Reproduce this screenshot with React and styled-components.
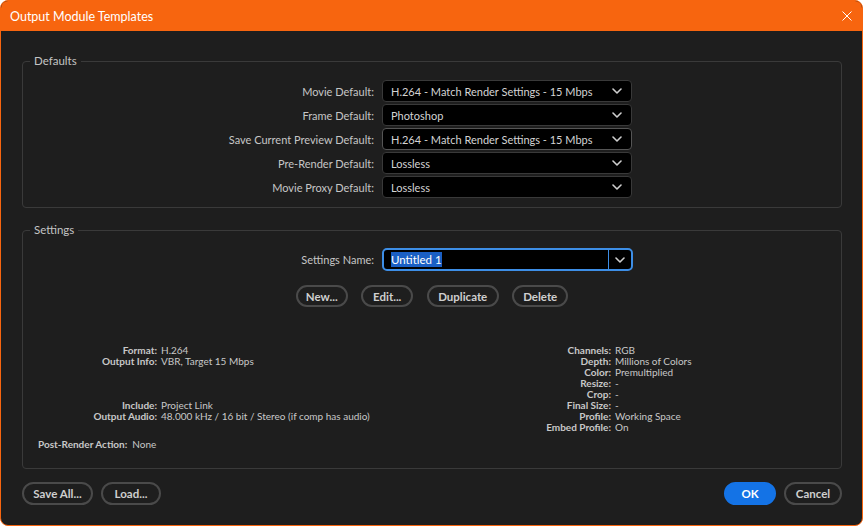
import React from 'react';
import styled, { createGlobalStyle } from 'styled-components';

const Global = createGlobalStyle`
  html, body { margin: 0; padding: 0; background: #ffffff; }
  body { font-family: Lato, "Open Sans", "Liberation Sans", sans-serif; }
  #root { width: 863px; height: 526px; }
`;

const Window = styled.div`
  box-sizing: border-box;
  width: 863px;
  height: 526px;
  border: 1px solid #f7650f;
  border-radius: 8px;
  background: #1e1e1e;
  display: flex;
  flex-direction: column;
  overflow: hidden;
`;

const TitleBar = styled.div`
  flex: none;
  height: 30px;
  background: #f7650f;
  display: flex;
  align-items: center;
  justify-content: space-between;
  padding: 0 10px 0 9px;
  color: #ffffff;
  font-size: 12.5px;
`;

const CloseButton = styled.button`
  border: 0;
  padding: 0;
  background: transparent;
  width: 10px;
  height: 10px;
  display: flex;
  color: #ffffff;
`;

const Body = styled.div`
  flex: 1;
  display: flex;
  flex-direction: column;
  padding: 23px 20px 0 21px;
`;

const Group = styled.fieldset`
  margin: ${(p) => p.$mt || 0}px 0 0 0;
  padding: ${(p) => p.$pt}px 0 ${(p) => p.$pb}px 0;
  border: 1px solid #3a3a3a;
  border-radius: 4px;
  min-width: 0;
`;

const Legend = styled.legend`
  margin-left: 7px;
  padding: 0 4px;
  font-size: 11.5px;
  line-height: 14px;
  color: #c4c4c4;
`;

const FormGrid = styled.div`
  display: grid;
  grid-template-columns: 351px 250px;
  column-gap: 8px;
  row-gap: 2px;
  align-items: center;
`;

const Label = styled.div`
  text-align: right;
  font-size: 11px;
  color: #c6c6c6;
  white-space: nowrap;
`;

const Select = styled.div`
  box-sizing: border-box;
  height: 22px;
  background: #000000;
  border: 1px solid ${(p) => (p.$active ? '#555555' : '#393939')};
  border-radius: 4px;
  display: flex;
  align-items: center;
  justify-content: space-between;
  padding: 0 9px 0 8px;
  color: #d4d4d4;
  font-size: 11px;
  white-space: nowrap;
`;

const Combo = styled.div`
  box-sizing: border-box;
  height: 23px;
  width: 251px;
  background: #000000;
  border: 2px solid #3d8ee6;
  border-radius: 5px;
  display: flex;
  align-items: stretch;
`;

const ComboInput = styled.div`
  flex: 1;
  display: flex;
  align-items: center;
  padding-left: 7px;
  font-size: 11.5px;
`;

const Selection = styled.span`
  background: #1a5fc4;
  color: #ffffff;
  padding: 1px 0;
  line-height: 13px;
`;

const ComboButton = styled.div`
  width: 22px;
  border-left: 1px solid #3d8ee6;
  display: flex;
  align-items: center;
  justify-content: center;
`;

const ButtonRow = styled.div`
  display: flex;
  justify-content: ${(p) => p.$justify || 'center'};
  gap: ${(p) => p.$gap}px;
  margin-top: ${(p) => p.$mt}px;
`;

const Spacer = styled.div`
  flex: 1;
`;

const PillButton = styled.button`
  box-sizing: border-box;
  height: ${(p) => p.$h || 22}px;
  min-width: ${(p) => p.$w || 0}px;
  padding: 0 8px;
  border: 2px solid ${(p) => (p.$primary ? '#1473e6' : '#4a4a4a')};
  border-radius: 12px;
  background: ${(p) => (p.$primary ? '#1473e6' : 'transparent')};
  color: ${(p) => (p.$primary ? '#ffffff' : '#cfcfcf')};
  font-family: Lato, "Open Sans", sans-serif;
  font-weight: 700;
  font-size: 11.5px;
  white-space: nowrap;
`;

const InfoArea = styled.div`
  display: grid;
  grid-template-columns: 478px auto;
  margin-top: 38px;
`;

const InfoGrid = styled.div`
  display: grid;
  grid-template-columns: ${(p) => p.$labelWidth}px auto;
  column-gap: 4px;
  align-content: start;
  font-size: 10px;
  line-height: 11px;
  color: #c8c8c8;
  white-space: nowrap;
`;

const InfoLabel = styled.div`
  text-align: right;
  font-weight: 700;
`;

const InfoValue = styled.div`
  font-weight: 400;
`;

const PostRender = styled.div`
  display: flex;
  gap: 5px;
  margin: 6px 0 0 15px;
  font-size: 10px;
  line-height: 11px;
  color: #c8c8c8;
`;

const Chevron = () => (
  <svg width="10" height="6" viewBox="0 0 10 6">
    <polyline points="1,1 5,5 9,1" fill="none" stroke="#cfcfcf" strokeWidth="1.6" strokeLinecap="round" strokeLinejoin="round" />
  </svg>
);

const CloseIcon = () => (
  <svg width="10" height="10" viewBox="0 0 10 10">
    <path d="M0.5 0.5 L9.5 9.5 M9.5 0.5 L0.5 9.5" stroke="#ffffff" strokeWidth="1" />
  </svg>
);

const defaults = [
  ['Movie Default:', 'H.264 - Match Render Settings - 15 Mbps'],
  ['Frame Default:', 'Photoshop'],
  ['Save Current Preview Default:', 'H.264 - Match Render Settings - 15 Mbps', true],
  ['Pre-Render Default:', 'Lossless'],
  ['Movie Proxy Default:', 'Lossless'],
];

const leftInfo = [
  ['Format:', 'H.264'],
  ['Output Info:', 'VBR, Target 15 Mbps'],
  ['', ''],
  ['', ''],
  ['', ''],
  ['Include:', 'Project Link'],
  ['Output Audio:', '48.000 kHz / 16 bit / Stereo (if comp has audio)'],
];

const rightInfo = [
  ['Channels:', 'RGB'],
  ['Depth:', 'Millions of Colors'],
  ['Color:', 'Premultiplied'],
  ['Resize:', '-'],
  ['Crop:', '-'],
  ['Final Size:', '-'],
  ['Profile:', 'Working Space'],
  ['Embed Profile:', 'On'],
];

const Info = ({ rows, labelWidth }) => (
  <InfoGrid $labelWidth={labelWidth}>
    {rows.map(([l, v], i) => (
      <React.Fragment key={i}>
        <InfoLabel>{l || '\u00a0'}</InfoLabel>
        <InfoValue>{v || '\u00a0'}</InfoValue>
      </React.Fragment>
    ))}
  </InfoGrid>
);

export default function App() {
  return (
    <>
      <Global />
      <Window>
        <TitleBar>
          <span>Output Module Templates</span>
          <CloseButton aria-label="Close"><CloseIcon /></CloseButton>
        </TitleBar>
        <Body>
          <Group $pt={12} $pb={9}>
            <Legend>Defaults</Legend>
            <FormGrid>
              {defaults.map(([label, value, active]) => (
                <React.Fragment key={label}>
                  <Label>{label}</Label>
                  <Select $active={active}>
                    <span>{value}</span>
                    <Chevron />
                  </Select>
                </React.Fragment>
              ))}
            </FormGrid>
          </Group>

          <Group $mt={15} $pt={11} $pb={18}>
            <Legend>Settings</Legend>
            <FormGrid>
              <Label>Settings Name:</Label>
              <Combo>
                <ComboInput><Selection>Untitled 1</Selection></ComboInput>
                <ComboButton><Chevron /></ComboButton>
              </Combo>
            </FormGrid>
            <ButtonRow $gap={13.5} $mt={14}>
              <PillButton $w={51}>New...</PillButton>
              <PillButton $w={52}>Edit...</PillButton>
              <PillButton $w={72}>Duplicate</PillButton>
              <PillButton $w={56}>Delete</PillButton>
            </ButtonRow>
            <InfoArea>
              <Info rows={leftInfo} labelWidth={134} />
              <Info rows={rightInfo} labelWidth={110} />
            </InfoArea>
            <PostRender>
              <InfoLabel>Post-Render Action:</InfoLabel>
              <InfoValue>None</InfoValue>
            </PostRender>
          </Group>

          <ButtonRow $gap={8} $mt={13} $justify="flex-start">
            <PillButton $h={23} $w={71}>Save All...</PillButton>
            <PillButton $h={23} $w={60}>Load...</PillButton>
            <Spacer />
            <PillButton $h={23} $w={52} $primary>OK</PillButton>
            <PillButton $h={23} $w={58}>Cancel</PillButton>
          </ButtonRow>
        </Body>
      </Window>
    </>
  );
}
